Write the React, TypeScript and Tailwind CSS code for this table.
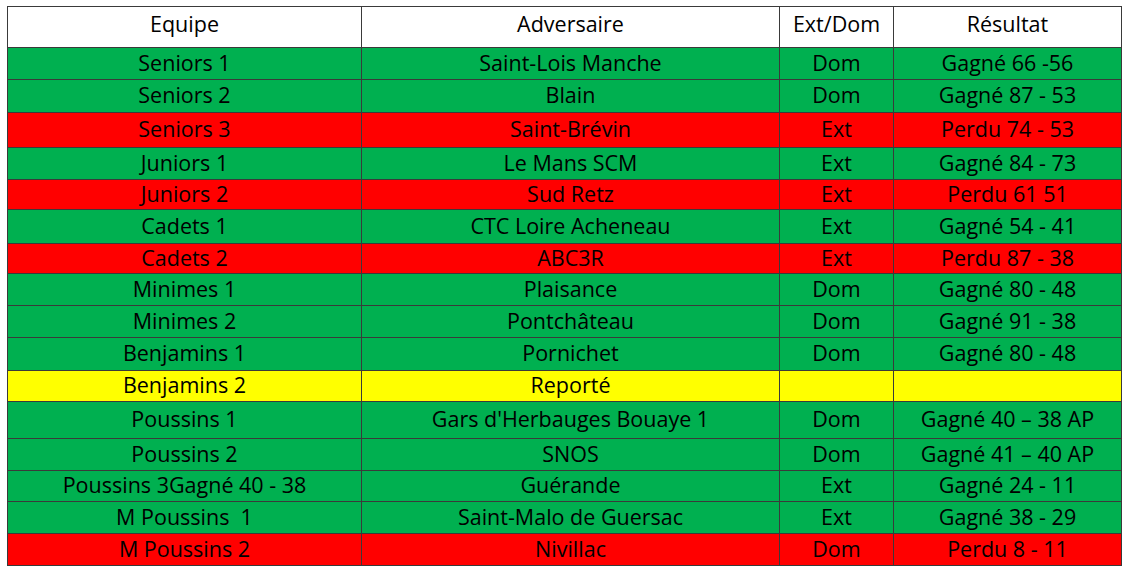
import React from "react";

type Row = {
  team: string;
  opponent: string;
  venue: string;
  result: string;
  tone: "win" | "loss" | "postponed";
  h: string;
};

const rows: Row[] = [
  { team: "Seniors 1", opponent: "Saint-Lois Manche", venue: "Dom", result: "Gagné 66 -56", tone: "win", h: "h-[32px]" },
  { team: "Seniors 2", opponent: "Blain", venue: "Dom", result: "Gagné 87 - 53", tone: "win", h: "h-[33px]" },
  { team: "Seniors 3", opponent: "Saint-Brévin", venue: "Ext", result: "Perdu 74 - 53", tone: "loss", h: "h-[35px]" },
  { team: "Juniors 1", opponent: "Le Mans SCM", venue: "Ext", result: "Gagné 84 - 73", tone: "win", h: "h-[32px]" },
  { team: "Juniors 2", opponent: "Sud Retz", venue: "Ext", result: "Perdu 61 51", tone: "loss", h: "h-[30px]" },
  { team: "Cadets 1", opponent: "CTC Loire Acheneau", venue: "Ext", result: "Gagné 54 - 41", tone: "win", h: "h-[34px]" },
  { team: "Cadets 2", opponent: "ABC3R", venue: "Ext", result: "Perdu 87 - 38", tone: "loss", h: "h-[30px]" },
  { team: "Minimes 1", opponent: "Plaisance", venue: "Dom", result: "Gagné 80 - 48", tone: "win", h: "h-[32px]" },
  { team: "Minimes 2", opponent: "Pontchâteau", venue: "Dom", result: "Gagné 91 - 38", tone: "win", h: "h-[32px]" },
  { team: "Benjamins 1", opponent: "Pornichet", venue: "Dom", result: "Gagné 80 - 48", tone: "win", h: "h-[33px]" },
  { team: "Benjamins 2", opponent: "Reporté", venue: "", result: "", tone: "postponed", h: "h-[31px]" },
  { team: "Poussins 1", opponent: "Gars d'Herbauges Bouaye 1", venue: "Dom", result: "Gagné 40 – 38 AP", tone: "win", h: "h-[37px]" },
  { team: "Poussins 2", opponent: "SNOS", venue: "Dom", result: "Gagné 41 – 40 AP", tone: "win", h: "h-[32px]" },
  { team: "Poussins 3Gagné 40 - 38", opponent: "Guérande", venue: "Ext", result: "Gagné 24 - 11", tone: "win", h: "h-[31px]" },
  { team: "M Poussins\u00a0\u00a01", opponent: "Saint-Malo de Guersac", venue: "Ext", result: "Gagné 38 - 29", tone: "win", h: "h-[32px]" },
  { team: "M Poussins 2", opponent: "Nivillac", venue: "Dom", result: "Perdu 8 - 11", tone: "loss", h: "h-[32px]" },
];

const toneBg = {
  win: "bg-[#00b050]",
  loss: "bg-[#ff0000]",
  postponed: "bg-[#ffff00]",
};

const cell = "border border-[#3a3a3a] p-0 text-center align-middle leading-none whitespace-nowrap";

export default function App() {
  return (
    <div className="w-[1127px] h-[570px] bg-white pt-[6px] pl-[7px] font-['Open_Sans',sans-serif] text-[21.5px] text-black">
      <table className="table-fixed border-collapse w-[1114px]">
        <colgroup>
          <col className="w-[354px]" />
          <col className="w-[418px]" />
          <col className="w-[114px]" />
          <col className="w-[228px]" />
        </colgroup>
        <thead>
          <tr className="h-[41px] bg-white">
            <th className={`${cell} font-normal pb-[6px]`}>Equipe</th>
            <th className={`${cell} font-normal pb-[6px]`}>Adversaire</th>
            <th className={`${cell} font-normal pb-[6px]`}>Ext/Dom</th>
            <th className={`${cell} font-normal pb-[6px]`}>Résultat</th>
          </tr>
        </thead>
        <tbody>
          {rows.map((r) => (
            <tr key={r.team} className={`${r.h} ${toneBg[r.tone]}`}>
              <td className={`${cell} pb-[2px]`}>{r.team}</td>
              <td className={`${cell} pb-[2px]`}>{r.opponent}</td>
              <td className={`${cell} pb-[2px]`}>{r.venue}</td>
              <td className={`${cell} pb-[2px]`}>{r.result}</td>
            </tr>
          ))}
        </tbody>
      </table>
    </div>
  );
}
